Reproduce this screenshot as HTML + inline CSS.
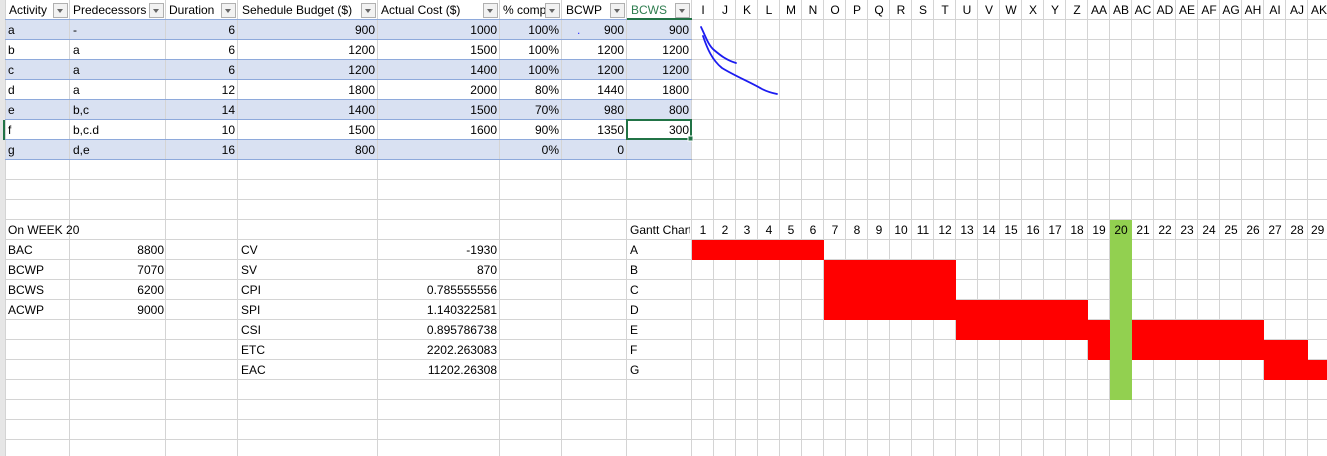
<!DOCTYPE html>
<html><head><meta charset="utf-8"><style>
html,body{margin:0;padding:0;}
body{width:1327px;height:456px;overflow:hidden;position:relative;background:#fff;font-family:"Liberation Sans",sans-serif;font-size:12px;color:#000;}
.t{position:absolute;height:20px;line-height:21px;white-space:nowrap;}
.r{text-align:right;}
.c{text-align:center;}
.bx{position:absolute;}
.fb{position:absolute;width:13px;height:13px;border:1px solid #b0b0b0;background:#f2f2f2;top:3px;}
.fb:after{content:"";position:absolute;left:3px;top:5px;border-left:3.5px solid transparent;border-right:3.5px solid transparent;border-top:4px solid #666;}
</style></head><body>
<!-- band fills -->
<div class="bx" style="left:5px;top:20px;width:687px;height:20px;background:#d9e1f2"></div>
<div class="bx" style="left:5px;top:60px;width:687px;height:20px;background:#d9e1f2"></div>
<div class="bx" style="left:5px;top:100px;width:687px;height:20px;background:#d9e1f2"></div>
<div class="bx" style="left:5px;top:140px;width:687px;height:20px;background:#d9e1f2"></div>
<svg class="bx" style="left:0;top:0" width="1327" height="456">
<g stroke="#d4d4d4" stroke-width="1" shape-rendering="crispEdges">
<line x1="0" y1="19.5" x2="1327" y2="19.5"/><line x1="0" y1="39.5" x2="1327" y2="39.5"/><line x1="0" y1="59.5" x2="1327" y2="59.5"/><line x1="0" y1="79.5" x2="1327" y2="79.5"/><line x1="0" y1="99.5" x2="1327" y2="99.5"/><line x1="0" y1="119.5" x2="1327" y2="119.5"/><line x1="0" y1="139.5" x2="1327" y2="139.5"/><line x1="0" y1="159.5" x2="1327" y2="159.5"/><line x1="0" y1="179.5" x2="1327" y2="179.5"/><line x1="0" y1="199.5" x2="1327" y2="199.5"/><line x1="0" y1="219.5" x2="1327" y2="219.5"/><line x1="0" y1="239.5" x2="1327" y2="239.5"/><line x1="0" y1="259.5" x2="1327" y2="259.5"/><line x1="0" y1="279.5" x2="1327" y2="279.5"/><line x1="0" y1="299.5" x2="1327" y2="299.5"/><line x1="0" y1="319.5" x2="1327" y2="319.5"/><line x1="0" y1="339.5" x2="1327" y2="339.5"/><line x1="0" y1="359.5" x2="1327" y2="359.5"/><line x1="0" y1="379.5" x2="1327" y2="379.5"/><line x1="0" y1="399.5" x2="1327" y2="399.5"/><line x1="0" y1="419.5" x2="1327" y2="419.5"/><line x1="0" y1="439.5" x2="1327" y2="439.5"/>
<line x1="5.5" y1="0" x2="5.5" y2="456"/><line x1="69.5" y1="0" x2="69.5" y2="456"/><line x1="165.5" y1="0" x2="165.5" y2="456"/><line x1="237.5" y1="0" x2="237.5" y2="456"/><line x1="377.5" y1="0" x2="377.5" y2="456"/><line x1="499.5" y1="0" x2="499.5" y2="456"/><line x1="561.5" y1="0" x2="561.5" y2="456"/><line x1="626.5" y1="0" x2="626.5" y2="456"/><line x1="691.5" y1="0" x2="691.5" y2="456"/>
<line x1="713.5" y1="0" x2="713.5" y2="456"/><line x1="735.5" y1="0" x2="735.5" y2="456"/><line x1="757.5" y1="0" x2="757.5" y2="456"/><line x1="779.5" y1="0" x2="779.5" y2="456"/><line x1="801.5" y1="0" x2="801.5" y2="456"/><line x1="823.5" y1="0" x2="823.5" y2="456"/><line x1="845.5" y1="0" x2="845.5" y2="456"/><line x1="867.5" y1="0" x2="867.5" y2="456"/><line x1="889.5" y1="0" x2="889.5" y2="456"/><line x1="911.5" y1="0" x2="911.5" y2="456"/><line x1="933.5" y1="0" x2="933.5" y2="456"/><line x1="955.5" y1="0" x2="955.5" y2="456"/><line x1="977.5" y1="0" x2="977.5" y2="456"/><line x1="999.5" y1="0" x2="999.5" y2="456"/><line x1="1021.5" y1="0" x2="1021.5" y2="456"/><line x1="1043.5" y1="0" x2="1043.5" y2="456"/><line x1="1065.5" y1="0" x2="1065.5" y2="456"/><line x1="1087.5" y1="0" x2="1087.5" y2="456"/><line x1="1109.5" y1="0" x2="1109.5" y2="456"/><line x1="1131.5" y1="0" x2="1131.5" y2="456"/><line x1="1153.5" y1="0" x2="1153.5" y2="456"/><line x1="1175.5" y1="0" x2="1175.5" y2="456"/><line x1="1197.5" y1="0" x2="1197.5" y2="456"/><line x1="1219.5" y1="0" x2="1219.5" y2="456"/><line x1="1241.5" y1="0" x2="1241.5" y2="456"/><line x1="1263.5" y1="0" x2="1263.5" y2="456"/><line x1="1285.5" y1="0" x2="1285.5" y2="456"/><line x1="1307.5" y1="0" x2="1307.5" y2="456"/>
</g>
<g stroke="#8ea9db" stroke-width="1" shape-rendering="crispEdges">
<line x1="5" y1="19.5" x2="692" y2="19.5"/><line x1="5" y1="39.5" x2="692" y2="39.5"/><line x1="5" y1="59.5" x2="692" y2="59.5"/><line x1="5" y1="79.5" x2="692" y2="79.5"/><line x1="5" y1="99.5" x2="692" y2="99.5"/><line x1="5" y1="119.5" x2="692" y2="119.5"/><line x1="5" y1="139.5" x2="692" y2="139.5"/><line x1="5" y1="159.5" x2="692" y2="159.5"/>
</g>
<g fill="#ff0000" shape-rendering="crispEdges">
<rect x="692" y="240" width="132" height="20"/>
<rect x="824" y="260" width="132" height="40"/>
<rect x="824" y="300" width="264" height="20"/>
<rect x="956" y="320" width="308" height="20"/>
<rect x="1088" y="340" width="220" height="20"/>
<rect x="1264" y="360" width="63" height="20"/>
</g>
<rect x="0" y="0" width="5" height="456" fill="#e6e6e6"/>
<rect x="3" y="120" width="2" height="20" fill="#217346"/>
<rect x="627" y="18" width="65" height="2" fill="#217346"/>
<rect x="1110" y="220" width="22" height="180" fill="#92d050"/>
<rect x="627" y="120" width="64" height="19" fill="none" stroke="#217346" stroke-width="2"/>
<rect x="688" y="136" width="5" height="5" fill="#217346" stroke="#fff" stroke-width="1"/>
<path d="M701 27 C705 35,708 45,714 50 C720 55,726 60,736 63" fill="none" stroke="#1c1cf0" stroke-width="1.8" stroke-linecap="round"/>
<path d="M703 36 C707 48,712 60,722 68 C735 76,750 82,762 89 C768 92,772 93,777 94" fill="none" stroke="#1c1cf0" stroke-width="1.8" stroke-linecap="round"/>
</svg>
<!-- header -->
<div class="t" style="left:9px;top:0">Activity</div><div class="fb" style="left:53px"></div>
<div class="t" style="left:73px;top:0;width:76px;overflow:hidden">Predecessors</div><div class="fb" style="left:149px"></div>
<div class="t" style="left:169px;top:0">Duration</div><div class="fb" style="left:221px"></div>
<div class="t" style="left:242px;top:0">Sehedule Budget ($)</div><div class="fb" style="left:361px"></div>
<div class="t" style="left:381px;top:0">Actual Cost ($)</div><div class="fb" style="left:483px"></div>
<div class="t" style="left:503px;top:0;width:42px;overflow:hidden">% comp</div><div class="fb" style="left:545px"></div>
<div class="t" style="left:566px;top:0">BCWP</div><div class="fb" style="left:610px"></div>
<div class="t" style="left:631px;top:0;color:#2e7d4f">BCWS</div><div class="fb" style="left:675px"></div>
<!-- column letters -->
<div class="t c" style="left:692px;top:0;width:22px">I</div><div class="t c" style="left:714px;top:0;width:22px">J</div><div class="t c" style="left:736px;top:0;width:22px">K</div><div class="t c" style="left:758px;top:0;width:22px">L</div><div class="t c" style="left:780px;top:0;width:22px">M</div><div class="t c" style="left:802px;top:0;width:22px">N</div><div class="t c" style="left:824px;top:0;width:22px">O</div><div class="t c" style="left:846px;top:0;width:22px">P</div><div class="t c" style="left:868px;top:0;width:22px">Q</div><div class="t c" style="left:890px;top:0;width:22px">R</div><div class="t c" style="left:912px;top:0;width:22px">S</div><div class="t c" style="left:934px;top:0;width:22px">T</div><div class="t c" style="left:956px;top:0;width:22px">U</div><div class="t c" style="left:978px;top:0;width:22px">V</div><div class="t c" style="left:1000px;top:0;width:22px">W</div><div class="t c" style="left:1022px;top:0;width:22px">X</div><div class="t c" style="left:1044px;top:0;width:22px">Y</div><div class="t c" style="left:1066px;top:0;width:22px">Z</div><div class="t c" style="left:1088px;top:0;width:22px">AA</div><div class="t c" style="left:1110px;top:0;width:22px">AB</div><div class="t c" style="left:1132px;top:0;width:22px">AC</div><div class="t c" style="left:1154px;top:0;width:22px">AD</div><div class="t c" style="left:1176px;top:0;width:22px">AE</div><div class="t c" style="left:1198px;top:0;width:22px">AF</div><div class="t c" style="left:1220px;top:0;width:22px">AG</div><div class="t c" style="left:1242px;top:0;width:22px">AH</div><div class="t c" style="left:1264px;top:0;width:22px">AI</div><div class="t c" style="left:1286px;top:0;width:22px">AJ</div><div class="t" style="left:1311px;top:0">AK</div>
<!-- rows -->
<div class="t" style="left:8px;top:20px">a</div><div class="t" style="left:73px;top:20px">-</div><div class="t r" style="left:166px;top:20px;width:69px">6</div><div class="t r" style="left:238px;top:20px;width:137px">900</div><div class="t r" style="left:378px;top:20px;width:119px">1000</div><div class="t r" style="left:500px;top:20px;width:59px">100%</div><div class="t" style="left:577px;top:20px;color:#33f">.</div><div class="t r" style="left:562px;top:20px;width:62px">900</div><div class="t r" style="left:627px;top:20px;width:62px">900</div>
<div class="t" style="left:8px;top:40px">b</div><div class="t" style="left:73px;top:40px">a</div><div class="t r" style="left:166px;top:40px;width:69px">6</div><div class="t r" style="left:238px;top:40px;width:137px">1200</div><div class="t r" style="left:378px;top:40px;width:119px">1500</div><div class="t r" style="left:500px;top:40px;width:59px">100%</div><div class="t r" style="left:562px;top:40px;width:62px">1200</div><div class="t r" style="left:627px;top:40px;width:62px">1200</div>
<div class="t" style="left:8px;top:60px">c</div><div class="t" style="left:73px;top:60px">a</div><div class="t r" style="left:166px;top:60px;width:69px">6</div><div class="t r" style="left:238px;top:60px;width:137px">1200</div><div class="t r" style="left:378px;top:60px;width:119px">1400</div><div class="t r" style="left:500px;top:60px;width:59px">100%</div><div class="t r" style="left:562px;top:60px;width:62px">1200</div><div class="t r" style="left:627px;top:60px;width:62px">1200</div>
<div class="t" style="left:8px;top:80px">d</div><div class="t" style="left:73px;top:80px">a</div><div class="t r" style="left:166px;top:80px;width:69px">12</div><div class="t r" style="left:238px;top:80px;width:137px">1800</div><div class="t r" style="left:378px;top:80px;width:119px">2000</div><div class="t r" style="left:500px;top:80px;width:59px">80%</div><div class="t r" style="left:562px;top:80px;width:62px">1440</div><div class="t r" style="left:627px;top:80px;width:62px">1800</div>
<div class="t" style="left:8px;top:100px">e</div><div class="t" style="left:73px;top:100px">b,c</div><div class="t r" style="left:166px;top:100px;width:69px">14</div><div class="t r" style="left:238px;top:100px;width:137px">1400</div><div class="t r" style="left:378px;top:100px;width:119px">1500</div><div class="t r" style="left:500px;top:100px;width:59px">70%</div><div class="t r" style="left:562px;top:100px;width:62px">980</div><div class="t r" style="left:627px;top:100px;width:62px">800</div>
<div class="t" style="left:8px;top:120px">f</div><div class="t" style="left:73px;top:120px">b,c.d</div><div class="t r" style="left:166px;top:120px;width:69px">10</div><div class="t r" style="left:238px;top:120px;width:137px">1500</div><div class="t r" style="left:378px;top:120px;width:119px">1600</div><div class="t r" style="left:500px;top:120px;width:59px">90%</div><div class="t r" style="left:562px;top:120px;width:62px">1350</div><div class="t r" style="left:627px;top:120px;width:62px">300</div>
<div class="t" style="left:8px;top:140px">g</div><div class="t" style="left:73px;top:140px">d,e</div><div class="t r" style="left:166px;top:140px;width:69px">16</div><div class="t r" style="left:238px;top:140px;width:137px">800</div><div class="t r" style="left:500px;top:140px;width:59px">0%</div><div class="t r" style="left:562px;top:140px;width:62px">0</div>
<!-- lower -->
<div class="t" style="left:8px;top:220px">On WEEK 20</div>
<div class="t" style="left:8px;top:240px">BAC</div><div class="t r" style="left:70px;top:240px;width:94px">8800</div>
<div class="t" style="left:8px;top:260px">BCWP</div><div class="t r" style="left:70px;top:260px;width:94px">7070</div>
<div class="t" style="left:8px;top:280px">BCWS</div><div class="t r" style="left:70px;top:280px;width:94px">6200</div>
<div class="t" style="left:8px;top:300px">ACWP</div><div class="t r" style="left:70px;top:300px;width:94px">9000</div>
<div class="t" style="left:241px;top:240px">CV</div><div class="t r" style="left:378px;top:240px;width:119px">-1930</div>
<div class="t" style="left:241px;top:260px">SV</div><div class="t r" style="left:378px;top:260px;width:119px">870</div>
<div class="t" style="left:241px;top:280px">CPI</div><div class="t r" style="left:378px;top:280px;width:119px">0.785555556</div>
<div class="t" style="left:241px;top:300px">SPI</div><div class="t r" style="left:378px;top:300px;width:119px">1.140322581</div>
<div class="t" style="left:241px;top:320px">CSI</div><div class="t r" style="left:378px;top:320px;width:119px">0.895786738</div>
<div class="t" style="left:241px;top:340px">ETC</div><div class="t r" style="left:378px;top:340px;width:119px">2202.263083</div>
<div class="t" style="left:241px;top:360px">EAC</div><div class="t r" style="left:378px;top:360px;width:119px">11202.26308</div>
<div class="t" style="left:630px;top:220px;width:60px;overflow:hidden">Gantt Chart</div>
<div class="t" style="left:630px;top:240px">A</div><div class="t" style="left:630px;top:260px">B</div><div class="t" style="left:630px;top:280px">C</div><div class="t" style="left:630px;top:300px">D</div><div class="t" style="left:630px;top:320px">E</div><div class="t" style="left:630px;top:340px">F</div><div class="t" style="left:630px;top:360px">G</div>
<div class="t c" style="left:692px;top:220px;width:22px">1</div><div class="t c" style="left:714px;top:220px;width:22px">2</div><div class="t c" style="left:736px;top:220px;width:22px">3</div><div class="t c" style="left:758px;top:220px;width:22px">4</div><div class="t c" style="left:780px;top:220px;width:22px">5</div><div class="t c" style="left:802px;top:220px;width:22px">6</div><div class="t c" style="left:824px;top:220px;width:22px">7</div><div class="t c" style="left:846px;top:220px;width:22px">8</div><div class="t c" style="left:868px;top:220px;width:22px">9</div><div class="t c" style="left:890px;top:220px;width:22px">10</div><div class="t c" style="left:912px;top:220px;width:22px">11</div><div class="t c" style="left:934px;top:220px;width:22px">12</div><div class="t c" style="left:956px;top:220px;width:22px">13</div><div class="t c" style="left:978px;top:220px;width:22px">14</div><div class="t c" style="left:1000px;top:220px;width:22px">15</div><div class="t c" style="left:1022px;top:220px;width:22px">16</div><div class="t c" style="left:1044px;top:220px;width:22px">17</div><div class="t c" style="left:1066px;top:220px;width:22px">18</div><div class="t c" style="left:1088px;top:220px;width:22px">19</div><div class="t c" style="left:1110px;top:220px;width:22px">20</div><div class="t c" style="left:1132px;top:220px;width:22px">21</div><div class="t c" style="left:1154px;top:220px;width:22px">22</div><div class="t c" style="left:1176px;top:220px;width:22px">23</div><div class="t c" style="left:1198px;top:220px;width:22px">24</div><div class="t c" style="left:1220px;top:220px;width:22px">25</div><div class="t c" style="left:1242px;top:220px;width:22px">26</div><div class="t c" style="left:1264px;top:220px;width:22px">27</div><div class="t c" style="left:1286px;top:220px;width:22px">28</div><div class="t" style="left:1311px;top:220px">29</div>
</body></html>
